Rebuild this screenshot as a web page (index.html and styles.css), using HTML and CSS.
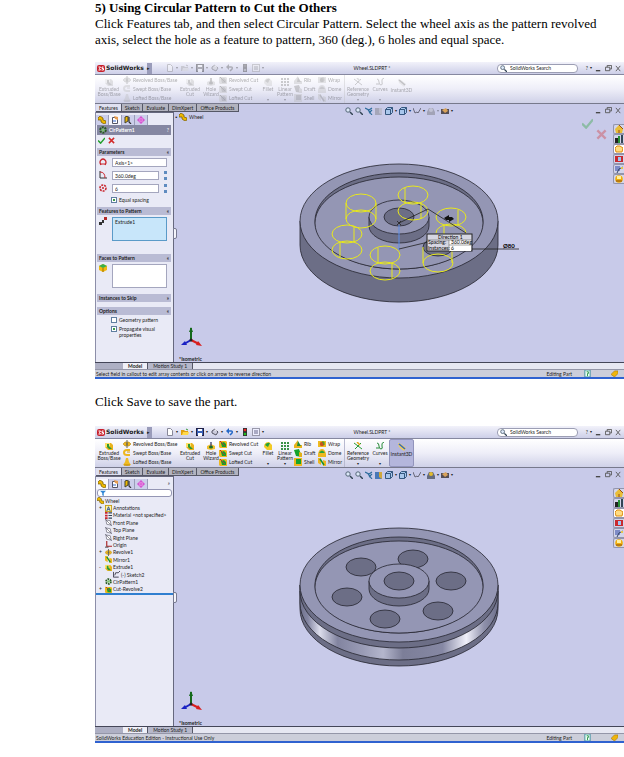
FILE: index.html
```html
<!DOCTYPE html>
<html lang="en">
<head>
  <meta charset="UTF-8">
  <meta name="viewport" content="width=device-width, initial-scale=1.0">
  <title>Using Circular Pattern to Cut the Others</title>
  <link rel="stylesheet" href="styles.css">
</head>
<body>
  <!-- shared icons -->
  <svg class="defs" aria-hidden="true">
    <symbol id="logo" viewBox="0 0 8 8"><rect y="1" width="8" height="7" rx="2" fill="#c8202c"/><path d="M1.500 3h2l-1 1.500 1 1.500h-2M5 3h1.500M5 3v1.500h1.500V6H4.500" stroke="#fff" fill="none"/></symbol>
    <symbol id="new" viewBox="0 0 8 8"><path d="M1.500.5h3l2 2v5h-5z" fill="#fff" stroke="#889"/></symbol>
    <symbol id="open" viewBox="0 0 8 8"><path d="M0 7V2h3l1 1h3v4z" fill="#e0a010"/><path d="M1 7l1-3h6L7 7z" fill="#ffd84a"/><path d="M5 1l2 1" stroke="#393"/></symbol>
    <symbol id="save" viewBox="0 0 8 8"><rect x=".5" y=".5" width="7" height="7" fill="#3a62b8" stroke="#224"/><path d="M2 1h4v2H2zM2 5h4v3H2z" fill="#fff"/></symbol>
    <symbol id="print" viewBox="0 0 8 8"><path d="M1 3l3-2 3 3-2 3-4-2z" fill="#ccd" stroke="#556"/><path d="M3 2l2-1 1 2" fill="#fff"/></symbol>
    <symbol id="undo" viewBox="0 0 8 8"><path d="M2 3h3q2 0 1 2L4 7" fill="none" stroke="#2468c8" stroke-width="1.500"/><path d="M0 3l3-3v6z" fill="#2468c8"/></symbol>
    <symbol id="light" viewBox="0 0 8 8"><rect x="2" width="4" height="8" fill="#333"/><circle cx="4" cy="2" r="1.300" fill="#e22"/><circle cx="4" cy="6" r="1.300" fill="#2b2"/></symbol>
    <symbol id="list" viewBox="0 0 8 8"><rect x=".5" y=".5" width="7" height="7" fill="#eef" stroke="#99a"/><path d="M2 3h4M2 5h4" stroke="#668"/></symbol>
    <symbol id="extrude" viewBox="0 0 8 8"><path d="M0 1h6l2 2v5H3L0 5z" fill="#e9b31c"/><path d="M0 1h5v4H0z" fill="#ffe066"/><path d="M2 2h2v2l3 3H4L2 5z" fill="#2b9a34"/></symbol>
    <symbol id="revolve" viewBox="0 0 8 8"><path d="M0 4l2-2h4l2 2-2 2H2z" fill="#eab420" stroke="#a67a08" stroke-width=".5"/><path d="M4 0v8M3 4h2" stroke="#665"/></symbol>
    <symbol id="sweep" viewBox="0 0 8 8"><path d="M7 1H4Q1 1 1 3.500T4 6h3" fill="none" stroke="#edb71f" stroke-width="2"/><path d="M4 3h3" stroke="#d69800"/></symbol>
    <symbol id="loft" viewBox="0 0 8 8"><path d="M3 0h2l1 4 2 3-4 1-4-1 2-3z" fill="#efbb22"/><path d="M1 7h6" stroke="#b98605"/></symbol>
    <symbol id="cut" viewBox="0 0 8 8"><path d="M0 1h7l1 1v6H1L0 7z" fill="#edb71f"/><path d="M2 3l3-1 2 2v3H3z" fill="#17a32c"/><path d="M1 1l5 5" stroke="#a33"/></symbol>
    <symbol id="hole" viewBox="0 0 8 8"><path d="M0 4l4-2 4 2v3L4 8 0 7z" fill="#f0bf2d"/><ellipse cx="4" cy="5" rx="2" ry="1.500" fill="#196f28"/><path d="M4 0v4" stroke="#557" stroke-width="1.500"/></symbol>
    <symbol id="fillet" viewBox="0 0 8 8"><path d="M0 5q0-5 5-5l3 3v5H3z" fill="#f2ca25"/><path d="M1 3q2-3 5-2L4 5z" fill="#25a339"/></symbol>
    <symbol id="grid" viewBox="0 0 8 8"><path d="M0 0h2v2H0zM3 0h2v2H3zM6 0h2v2H6zM0 3h2v2H0zM3 3h2v2H3zM6 3h2v2H6zM0 6h2v2H0zM3 6h2v2H3zM6 6h2v2H6z" fill="#3a9148"/></symbol>
    <symbol id="rib" viewBox="0 0 8 8"><path d="M0 5l4-5v5h4v3H0z" fill="#e9b31c"/><path d="M4 1l3 5H3z" fill="#208c38"/></symbol>
    <symbol id="draft" viewBox="0 0 8 8"><path d="M0 1l5-1 3 8-6-1z" fill="#17a32c"/><path d="M5 3l3 1v4H5z" fill="#e2b116"/></symbol>
    <symbol id="shell" viewBox="0 0 8 8"><rect width="8" height="8" fill="#edb71f"/><rect x="2" y="1" width="5" height="5" fill="#17a32c"/></symbol>
    <symbol id="wrap" viewBox="0 0 8 8"><path d="M0 1h8v6H0z" fill="#efbb22"/><circle cx="4" cy="4" r="2.200" fill="#c8551d"/><path d="M4 2h2v3" stroke="#2a3" fill="none"/></symbol>
    <symbol id="dome" viewBox="0 0 8 8"><path d="M0 5q1-5 4-5t4 5v3H0z" fill="#edb71f"/><path d="M1 4q3-5 6 0z" fill="#26a43a"/></symbol>
    <symbol id="mirror" viewBox="0 0 8 8"><path d="M0 0h3v7L0 5zM5 2l3 1v5H5z" fill="#edb71f"/><path d="M2 1l4 6" stroke="#17922c" stroke-width="1.500"/></symbol>
    <symbol id="refgeo" viewBox="0 0 8 8"><path d="M0 1l8 6M1 7l6-6" stroke="#2b9a34"/><path d="M3 0l3 3" stroke="#e2a616" stroke-width="1.500"/></symbol>
    <symbol id="curves" viewBox="0 0 8 8"><path d="M1 1q2 0 2 3t2 3 1-3 2-4M0 6h3" fill="none" stroke="#268b38"/></symbol>
    <symbol id="instant" viewBox="0 0 8 8"><path d="M0 0l3 1 5 4-2 3-5-4z" fill="#f0cf57"/><path d="M1 1l6 5" stroke="#2f66c2" stroke-width="1.500"/></symbol>
    <symbol id="zoomfit" viewBox="0 0 8 8"><circle cx="3" cy="3" r="2.200" fill="#dce8f8" stroke="#567"/><path d="M5 5l3 3" stroke="#345" stroke-width="1.500"/></symbol>
    <symbol id="prev" viewBox="0 0 8 8"><path d="M0 1l4 2 3-2M3 3l4 5M7 3L4 6" fill="none" stroke="#2c6c9c" stroke-width="1.200"/></symbol>
    <symbol id="section" viewBox="0 0 8 8"><path d="M0 1h7v7H0z" fill="#4878b8"/><path d="M4 1h3v7L4 6z" fill="#cfa83c"/></symbol>
    <symbol id="cube" viewBox="0 0 8 8"><path d="M.5 2.500l2-2h5v5l-2 2h-5z" fill="#a9c7ec" stroke="#35577f"/><path d="M.5 2.500h5v5M5.500 2.500l2-2" fill="none" stroke="#35577f"/></symbol>
    <symbol id="glasses" viewBox="0 0 8 8"><path d="M0 1l2 5 2-1 1 1 3-5" fill="none" stroke="#667"/></symbol>
    <symbol id="scene" viewBox="0 0 8 8"><path d="M0 8V5l2-4h4l2 4v3z" fill="#666b7d"/><circle cx="4" cy="3" r="2" fill="#e2bb2d"/></symbol>
    <symbol id="camera" viewBox="0 0 8 8"><path d="M0 2h8v5H0z" fill="#554e55"/><path d="M1 3l4-2 2 3-3 2z" fill="#d8a25a"/></symbol>
    <symbol id="part" viewBox="0 0 8 8"><path d="M0 2l2-2 3 2v2l3 1v2L6 8 3 6V4L0 4z" fill="#edb800" stroke="#6e5500" stroke-width=".7"/></symbol>
    <symbol id="props" viewBox="0 0 8 8"><path d="M1.500 1.500h5v6h-5z" fill="#fff" stroke="#556"/><path d="M3 0l4 1v3L4 3z" fill="#e69b50"/><path d="M2 5h3" stroke="#36c"/></symbol>
    <symbol id="config" viewBox="0 0 8 8"><path d="M1 1l3-1v5L1 7z" fill="#edb800" stroke="#443"/><path d="M5 1v5l2 2" stroke="#333" stroke-width="1.200" fill="none"/></symbol>
    <symbol id="target" viewBox="0 0 8 8"><circle cx="4" cy="4" r="2.500" fill="#f7c8f2" stroke="#d44bd0"/><path d="M4 0v8M0 4h8" stroke="#d44bd0"/></symbol>
    <symbol id="gear" viewBox="0 0 8 8"><circle cx="4" cy="4" r="2.800" fill="none" stroke="#285a20" stroke-width="2" stroke-dasharray="2 .9"/><circle cx="4" cy="4" r="1.500" fill="#7bc36c"/></symbol>
    <symbol id="redgear" viewBox="0 0 8 8"><circle cx="4" cy="4" r="3" fill="none" stroke="#c9252d" stroke-width="1.600" stroke-dasharray="2 1"/><circle cx="4" cy="4" r="1" fill="#c9252d"/></symbol>
    <symbol id="rotate" viewBox="0 0 8 8"><path d="M2 7Q0 4 2 2t4 0 0 5" fill="none" stroke="#c9252d" stroke-width="1.300"/><path d="M1 6h6" stroke="#c9252d"/></symbol>
    <symbol id="angle" viewBox="0 0 8 8"><path d="M1 0v7h7" fill="none" stroke="#333"/><path d="M1 1q5 0 5 6" fill="none" stroke="#c9252d"/></symbol>
    <symbol id="feats" viewBox="0 0 8 8"><path d="M0 5h3v3H0zM3 3h2v3H3z" fill="#333"/><path d="M5 0h3v3H5z" fill="#b32a2a"/></symbol>
    <symbol id="face" viewBox="0 0 8 8"><path d="M0 2l4-2 4 2v4L4 8 0 6z" fill="#f2b90f"/><path d="M0 2l4-2 4 2-4 2z" fill="#38b04a"/><path d="M4 4v4" stroke="#9c7100"/></symbol>
    <symbol id="tick" viewBox="0 0 8 8"><path d="M0 4l3 3 5-6" fill="none" stroke="#23a02d" stroke-width="1.700"/></symbol>
    <symbol id="cross" viewBox="0 0 8 8"><path d="M1 1l6 6M7 1L1 7" stroke="#d22a2a" stroke-width="1.700"/></symbol>
    <symbol id="note" viewBox="0 0 8 8"><rect x=".5" y=".5" width="7" height="7" fill="#fff3a8" stroke="#c29a12"/><path d="M2 7l2-5 2 5M3 5h2" fill="none" stroke="#224a9c"/></symbol>
    <symbol id="material" viewBox="0 0 8 8"><path d="M0 1h3M0 4h3M0 7h3" stroke="#c9252d" stroke-width="2"/><path d="M4 1h4M4 4h4M4 7h4" stroke="#345" stroke-width="1.200"/></symbol>
    <symbol id="plane" viewBox="0 0 8 8"><path d="M1 1l5 1 1 5-5-1zM0 0l8 8" fill="#fff" stroke="#556" stroke-width=".7"/></symbol>
    <symbol id="origin" viewBox="0 0 8 8"><path d="M2 0v6h6" fill="none" stroke="#a22" stroke-width="1.300"/><path d="M0 7h4" stroke="#333"/></symbol>
    <symbol id="sketch" viewBox="0 0 8 8"><path d="M.5 1v6h6M2 5l1-3h3l2-2" fill="none" stroke="#334"/></symbol>
    <symbol id="house" viewBox="0 0 8 8"><path d="M0 4l4-4 4 4-1 4H1z" fill="#e9bd37"/><path d="M4 0l4 4M4 5v3" stroke="#9a4d13"/></symbol>
    <symbol id="books" viewBox="0 0 8 8"><path d="M0 3h3v5H0z" fill="#222"/><path d="M3 1h2v7H3z" fill="#269136"/><path d="M6 0h2v8H6z" fill="#345"/></symbol>
    <symbol id="folder" viewBox="0 0 8 8"><path d="M0 3l2-2h3l3 2-1 4H1z" fill="#ffdc83" stroke="#dd8d11"/></symbol>
    <symbol id="palette" viewBox="0 0 8 8"><path d="M0 1h8v6H0z" fill="#c92a2f"/><path d="M3 2h3v4H3z" fill="#9cc7f3"/></symbol>
    <symbol id="tools" viewBox="0 0 8 8"><path d="M0 1h5v5H0z" fill="#7e8bc6"/><path d="M2 8l2-4 4-2" stroke="#346" fill="none"/><path d="M6 2h2v2H6z" fill="#e5c64e"/></symbol>
    <symbol id="ball" viewBox="0 0 8 8"><circle cx="4" cy="4" r="3.800" fill="#f1ae0c"/><path d="M2 1h4v3H2z" fill="#fff0a0"/><path d="M1 6h6" stroke="#844a10"/></symbol>
    <symbol id="help" viewBox="0 0 8 8"><rect x="1" width="6" height="8" fill="#e8fff0" stroke="#378b9c"/><path d="M3 2h2v2H4v3" fill="none" stroke="#218b42"/></symbol>
    <symbol id="tag" viewBox="0 0 8 8"><path d="M0 5l4-4h4v3L4 8z" fill="#efb50c" stroke="#9a6b00" stroke-width=".6"/></symbol>
    <symbol id="restore" viewBox="0 0 8 8"><path d="M2.500 2.500v-2h5v4h-2M.5 2.500h5v4h-5z" fill="none" stroke="#555"/></symbol>
    <symbol id="close" viewBox="0 0 8 8"><path d="M1 1l5 6M6 1L1 7" stroke="#555"/></symbol>
    <symbol id="min" viewBox="0 0 8 8"><path d="M1 6.500h5" stroke="#444" stroke-width="1.500"/></symbol>
    <symbol id="funnel" viewBox="0 0 8 8"><path d="M0 1h8L5 4v4L3 7V4z" fill="#2f86d6"/></symbol>
    <symbol id="triad" viewBox="0 0 26 24"><path d="M12 15V3" stroke="#14691a" stroke-width="2"/><path d="M12 2l2 5h-4z" fill="#14691a"/><path d="M12 15l8 4" stroke="#d81e1e" stroke-width="2"/><path d="M23 21l-6-1 2-4z" fill="#d81e1e"/><path d="M12 15l-7 4" stroke="#1b22c4" stroke-width="2"/><path d="M2 20l6 0-2-4z" fill="#1b22c4"/><circle cx="12" cy="15" r="1.500" fill="#222"/></symbol>
  </svg>

  <h1>5) Using Circular Pattern to Cut the Others</h1>
  <p>Click Features tab, and then select Circular Pattern. Select the wheel axis as the pattern revolved<br>axis, select the hole as a feature to pattern, 360 (deg.), 6 holes and equal space.</p>

  <!-- window while the pattern is being set up -->
  <section class="window">
    <header class="titlebar">
      <div class="brand"><svg><use href="#logo"/></svg><b>SolidWorks</b><button class="expand" aria-label="Menu">▸</button></div>
      <div class="quick dim">
        <button class="drop" aria-label="New"><svg><use href="#new"/></svg></button>
        <button class="drop" aria-label="Open"><svg><use href="#open"/></svg></button>
        <button class="drop" aria-label="Save"><svg><use href="#save"/></svg></button>
        <button class="drop" aria-label="Print"><svg><use href="#print"/></svg></button>
        <button class="drop" aria-label="Undo"><svg><use href="#undo"/></svg></button>
        <button aria-label="Rebuild"><svg><use href="#light"/></svg></button>
        <button class="drop" aria-label="Options"><svg><use href="#list"/></svg></button>
      </div>
      <span class="doc">Wheel.SLDPRT *</span>
      <label class="search"><svg><use href="#zoomfit"/></svg><input type="text" value="SolidWorks Search" aria-label="Search"></label>
      <div class="controls"><button class="drop">?</button><button aria-label="Minimize"><svg><use href="#min"/></svg></button><button aria-label="Restore"><svg><use href="#restore"/></svg></button><button aria-label="Close"><svg><use href="#close"/></svg></button></div>
    </header>
    <div class="ribbon off">
      <button class="big"><svg><use href="#extrude"/></svg>Extruded Boss/Base</button>
      <div class="stack">
        <button><svg><use href="#revolve"/></svg>Revolved Boss/Base</button>
        <button><svg><use href="#sweep"/></svg>Swept Boss/Base</button>
        <button><svg><use href="#loft"/></svg>Lofted Boss/Base</button>
      </div>
      <button class="big"><svg><use href="#extrude"/></svg>Extruded Cut</button>
      <button class="big"><svg><use href="#hole"/></svg>Hole Wizard</button>
      <div class="stack">
        <button><svg><use href="#cut"/></svg>Revolved Cut</button>
        <button><svg><use href="#cut"/></svg>Swept Cut</button>
        <button><svg><use href="#cut"/></svg>Lofted Cut</button>
      </div>
      <button class="big more"><svg><use href="#fillet"/></svg>Fillet</button>
      <button class="big more"><svg><use href="#grid"/></svg>Linear Pattern</button>
      <div class="stack">
        <button><svg><use href="#rib"/></svg>Rib</button>
        <button><svg><use href="#draft"/></svg>Draft</button>
        <button><svg><use href="#shell"/></svg>Shell</button>
      </div>
      <div class="stack">
        <button><svg><use href="#wrap"/></svg>Wrap</button>
        <button><svg><use href="#dome"/></svg>Dome</button>
        <button><svg><use href="#mirror"/></svg>Mirror</button>
      </div>
      <button class="big more first"><svg><use href="#refgeo"/></svg>Reference Geometry</button>
      <button class="big more"><svg><use href="#curves"/></svg>Curves</button>
      <button class="big instant"><svg><use href="#instant"/></svg>Instant3D</button>
    </div>
    <div class="viewbar">
      <nav class="tabs"><a href="#" class="active">Features</a><a href="#">Sketch</a><a href="#">Evaluate</a><a href="#">DimXpert</a><a href="#">Office Products</a></nav>
      <div class="viewtools">
        <button aria-label="Zoom to fit"><svg><use href="#zoomfit"/></svg></button>
        <button aria-label="Zoom to area"><svg><use href="#zoomfit"/></svg></button>
        <button aria-label="Previous view"><svg><use href="#prev"/></svg></button>
        <button class="dim" aria-label="Section view"><svg><use href="#section"/></svg></button>
        <button class="drop" aria-label="Orientation"><svg><use href="#cube"/></svg></button>
        <button class="drop" aria-label="Display style"><svg><use href="#cube"/></svg></button>
        <button class="drop" aria-label="Hide or show"><svg><use href="#glasses"/></svg></button>
        <button class="drop dim" aria-label="Scene"><svg><use href="#scene"/></svg></button>
        <button class="drop" aria-label="View settings"><svg><use href="#camera"/></svg></button>
      </div>
      <div class="controls"><button aria-label="Minimize"><svg><use href="#min"/></svg></button><button aria-label="Restore"><svg><use href="#restore"/></svg></button><button aria-label="Close"><svg><use href="#close"/></svg></button></div>
    </div>
    <div class="main">
      <aside class="panel">
        <div class="ptabs"><button><svg><use href="#part"/></svg></button><button class="on"><svg><use href="#props"/></svg></button><button><svg><use href="#config"/></svg></button><button><svg><use href="#target"/></svg></button></div>
        <div class="feature"><svg><use href="#gear"/></svg><b>CirPattern1</b><span>?</span></div>
        <div class="confirm"><button aria-label="OK"><svg><use href="#tick"/></svg></button><button aria-label="Cancel"><svg><use href="#cross"/></svg></button></div>
        <fieldset class="parameters">
          <legend>Parameters<span>«</span></legend>
          <div class="field"><svg><use href="#rotate"/></svg><input type="text" value="Axis&lt;1&gt;" aria-label="Axis"></div>
          <div class="field spin"><svg><use href="#angle"/></svg><input type="text" value="360.0deg" aria-label="Angle"><i></i></div>
          <div class="field spin"><svg><use href="#redgear"/></svg><input type="text" value="6" aria-label="Instances"><i></i></div>
          <label class="check"><input type="checkbox" checked>Equal spacing</label>
        </fieldset>
        <fieldset class="features">
          <legend>Features to Pattern<span>«</span></legend>
          <div class="field"><svg><use href="#feats"/></svg><textarea class="picked" aria-label="Features to Pattern">Extrude1</textarea></div>
        </fieldset>
        <fieldset class="faces">
          <legend>Faces to Pattern<span>«</span></legend>
          <div class="field"><svg><use href="#face"/></svg><textarea aria-label="Faces to Pattern"></textarea></div>
        </fieldset>
        <fieldset class="skip"><legend>Instances to Skip<span>»</span></legend></fieldset>
        <fieldset class="options">
          <legend>Options<span>«</span></legend>
          <label class="check"><input type="checkbox">Geometry pattern</label>
          <label class="check"><input type="checkbox" checked>Propagate visual properties</label>
        </fieldset>
      </aside>
      <div class="stage">
        <i class="handle"></i>
        <div class="flyout">▪ <svg><use href="#part"/></svg>Wheel</div>
        <svg class="wheel" viewBox="278 162 240 150">
          <path class="side" d="M299 221v24a99 57 0 0 0 198 0v-24z"/>
          <ellipse class="top" cx="398" cy="221" rx="99" ry="57"/>
          <ellipse class="side" cx="398" cy="221" rx="84" ry="48"/>
          <path class="top" d="M314 223a84 46 0 0 1 168 0a84 46 0 0 1-168 0z"/>
          <ellipse class="side" cx="437" cy="247" rx="15" ry="9"/>
          <path class="side" d="M368 217v9a30 17 0 0 0 60 0v-9z"/>
          <ellipse class="top" cx="398" cy="217" rx="30" ry="17"/>
          <ellipse class="side" cx="398" cy="217" rx="15" ry="9"/>
          <g class="preview">
            <ellipse cx="412" cy="195" rx="15" ry="9"/><ellipse cx="412" cy="211" rx="15" ry="9"/><path d="M404 188v15M420 203v16"/>
            <ellipse cx="450" cy="217" rx="15" ry="9"/><path d="M435 233a15 9 0 0 1 30 0M457 210v15M443 225v9"/>
            <ellipse cx="360" cy="203" rx="15" ry="9"/><ellipse cx="360" cy="219" rx="15" ry="9"/><path d="M345 203v16M375 203v16"/>
            <ellipse cx="346" cy="234" rx="15" ry="9"/><ellipse cx="346" cy="250" rx="15" ry="9"/><path d="M353 227v15M339 242v15"/>
            <ellipse cx="384" cy="255" rx="15" ry="9"/><ellipse cx="384" cy="271" rx="15" ry="9"/><path d="M377 248v15M391 263v15"/>
            <ellipse cx="437" cy="263" rx="15" ry="9"/><path d="M422 247v16M451 250v13"/>
          </g>
          <path d="M398 225v25" stroke="#5c8ee8"/>
          <path class="line" d="M398 223l29-14 38 24M398 249l42-10M470 249h48M396 221l4 4M400 221l-4 4"/>
          <path d="M443 218l5-3v2h3l2 2-5 3v-2h-3z" fill="#111"/>
          <text x="502" y="248" class="dimension">Ø80</text>
          <g class="callout">
            <rect x="426" y="234" width="45" height="17" fill="#d6d6e2" stroke="#222"/>
            <path d="M448 240h22v11h-22z" fill="#fff"/>
            <path d="M426 240h45M448 245h22M448 240v11" stroke="#666" stroke-width=".6"/>
            <text x="437" y="239">Direction 1</text>
            <text x="427" y="244">Spacing:</text><text x="450" y="244">360.0deg</text>
            <text x="427" y="250">Instances:</text><text x="450" y="250">6</text>
          </g>
        </svg>
        <div class="corner"><svg><use href="#tick"/></svg><svg><use href="#cross"/></svg></div>
        <div class="taskpane"><button><svg><use href="#house"/></svg></button><button><svg><use href="#books"/></svg></button><button class="on"><svg><use href="#folder"/></svg></button><button><svg><use href="#palette"/></svg></button><button><svg><use href="#tools"/></svg></button><button><svg><use href="#ball"/></svg></button></div>
        <div class="orient"><svg><use href="#triad"/></svg><b>*Isometric</b></div>
      </div>
    </div>
    <nav class="sheets"><span></span><a href="#" class="active">Model</a><a href="#">Motion Study 1</a></nav>
    <footer class="status"><span>Select field in callout to edit array contents or click on arrow to reverse direction</span><em>Editing Part</em><svg><use href="#help"/></svg><svg><use href="#tag"/></svg></footer>
  </section>

  <p class="save">Click Save to save the part.</p>

  <!-- finished part -->
  <section class="window">
    <header class="titlebar">
      <div class="brand"><svg><use href="#logo"/></svg><b>SolidWorks</b><button class="expand" aria-label="Menu">▸</button></div>
      <div class="quick">
        <button class="drop" aria-label="New"><svg><use href="#new"/></svg></button>
        <button class="drop" aria-label="Open"><svg><use href="#open"/></svg></button>
        <button class="drop" aria-label="Save"><svg><use href="#save"/></svg></button>
        <button class="drop" aria-label="Print"><svg><use href="#print"/></svg></button>
        <button class="drop" aria-label="Undo"><svg><use href="#undo"/></svg></button>
        <button aria-label="Rebuild"><svg><use href="#light"/></svg></button>
        <button class="drop" aria-label="Options"><svg><use href="#list"/></svg></button>
      </div>
      <span class="doc">Wheel.SLDPRT *</span>
      <label class="search"><svg><use href="#zoomfit"/></svg><input type="text" value="SolidWorks Search" aria-label="Search"></label>
      <div class="controls"><button class="drop">?</button><button aria-label="Minimize"><svg><use href="#min"/></svg></button><button aria-label="Restore"><svg><use href="#restore"/></svg></button><button aria-label="Close"><svg><use href="#close"/></svg></button></div>
    </header>
    <div class="ribbon">
      <button class="big"><svg><use href="#extrude"/></svg>Extruded Boss/Base</button>
      <div class="stack">
        <button><svg><use href="#revolve"/></svg>Revolved Boss/Base</button>
        <button><svg><use href="#sweep"/></svg>Swept Boss/Base</button>
        <button><svg><use href="#loft"/></svg>Lofted Boss/Base</button>
      </div>
      <button class="big"><svg><use href="#extrude"/></svg>Extruded Cut</button>
      <button class="big"><svg><use href="#hole"/></svg>Hole Wizard</button>
      <div class="stack">
        <button><svg><use href="#cut"/></svg>Revolved Cut</button>
        <button><svg><use href="#cut"/></svg>Swept Cut</button>
        <button><svg><use href="#cut"/></svg>Lofted Cut</button>
      </div>
      <button class="big more"><svg><use href="#fillet"/></svg>Fillet</button>
      <button class="big more"><svg><use href="#grid"/></svg>Linear Pattern</button>
      <div class="stack">
        <button><svg><use href="#rib"/></svg>Rib</button>
        <button><svg><use href="#draft"/></svg>Draft</button>
        <button><svg><use href="#shell"/></svg>Shell</button>
      </div>
      <div class="stack">
        <button><svg><use href="#wrap"/></svg>Wrap</button>
        <button><svg><use href="#dome"/></svg>Dome</button>
        <button><svg><use href="#mirror"/></svg>Mirror</button>
      </div>
      <button class="big more first"><svg><use href="#refgeo"/></svg>Reference Geometry</button>
      <button class="big more"><svg><use href="#curves"/></svg>Curves</button>
      <button class="big instant"><svg><use href="#instant"/></svg>Instant3D</button>
    </div>
    <div class="viewbar">
      <nav class="tabs"><a href="#" class="active">Features</a><a href="#">Sketch</a><a href="#">Evaluate</a><a href="#">DimXpert</a><a href="#">Office Products</a></nav>
      <div class="viewtools">
        <button aria-label="Zoom to fit"><svg><use href="#zoomfit"/></svg></button>
        <button aria-label="Zoom to area"><svg><use href="#zoomfit"/></svg></button>
        <button aria-label="Previous view"><svg><use href="#prev"/></svg></button>
        <button aria-label="Section view"><svg><use href="#section"/></svg></button>
        <button class="drop" aria-label="Orientation"><svg><use href="#cube"/></svg></button>
        <button class="drop" aria-label="Display style"><svg><use href="#cube"/></svg></button>
        <button class="drop" aria-label="Hide or show"><svg><use href="#glasses"/></svg></button>
        <button class="drop" aria-label="Scene"><svg><use href="#scene"/></svg></button>
        <button class="drop" aria-label="View settings"><svg><use href="#camera"/></svg></button>
      </div>
      <div class="controls"><button aria-label="Minimize"><svg><use href="#min"/></svg></button><button aria-label="Restore"><svg><use href="#restore"/></svg></button><button aria-label="Close"><svg><use href="#close"/></svg></button></div>
    </div>
    <div class="main">
      <aside class="panel">
        <div class="ptabs"><button class="on"><svg><use href="#part"/></svg></button><button><svg><use href="#props"/></svg></button><button><svg><use href="#config"/></svg></button><button><svg><use href="#target"/></svg></button><span>»</span></div>
        <label class="filter"><svg><use href="#funnel"/></svg><input type="text" aria-label="Filter"></label>
        <ul class="tree">
          <li class="root"><svg><use href="#part"/></svg>Wheel</li>
          <li class="plus"><svg><use href="#note"/></svg>Annotations</li>
          <li><svg><use href="#material"/></svg>Material &lt;not specified&gt;</li>
          <li><svg><use href="#plane"/></svg>Front Plane</li>
          <li><svg><use href="#plane"/></svg>Top Plane</li>
          <li><svg><use href="#plane"/></svg>Right Plane</li>
          <li><svg><use href="#origin"/></svg>Origin</li>
          <li class="plus"><svg><use href="#revolve"/></svg>Revolve1</li>
          <li><svg><use href="#mirror"/></svg>Mirror1</li>
          <li class="minus"><svg><use href="#extrude"/></svg>Extrude1</li>
          <li class="child"><svg><use href="#sketch"/></svg>(-) Sketch2</li>
          <li><svg><use href="#gear"/></svg>CirPattern1</li>
          <li class="plus"><svg><use href="#cut"/></svg>Cut-Revolve2</li>
        </ul>
      </aside>
      <div class="stage">
        <i class="handle"></i>
        <svg class="wheel" viewBox="278 526 240 150">
          <defs>
            <linearGradient id="groove">
              <stop offset="0" stop-color="#6f718c"/><stop offset=".04" stop-color="#8486a2"/><stop offset=".1" stop-color="#dcddec"/><stop offset=".19" stop-color="#8284a0"/><stop offset=".32" stop-color="#9a9cb6"/><stop offset=".42" stop-color="#b4b6cc"/><stop offset=".52" stop-color="#7c7e98"/><stop offset=".72" stop-color="#8688a4"/><stop offset=".84" stop-color="#f0f0fa"/><stop offset=".93" stop-color="#8e90aa"/><stop offset="1" stop-color="#6f718c"/>
            </linearGradient>
          </defs>
          <path class="side" d="M299 585v24a99 57 0 0 0 198 0v-24z"/>
          <path d="M299 591v12a99 57 0 0 0 198 0v-12z" fill="url(#groove)" stroke="#24252f" stroke-width=".8"/>
          <path class="side" d="M299 585v6a99 57 0 0 0 198 0v-6z"/>
          <ellipse class="top" cx="398" cy="585" rx="99" ry="57"/>
          <ellipse class="side" cx="398" cy="585" rx="84" ry="48"/>
          <path class="top" d="M314 587a84 46 0 0 1 168 0a84 46 0 0 1-168 0z"/>
          <g class="side">
            <ellipse cx="412" cy="559" rx="15" ry="9"/><ellipse cx="450" cy="581" rx="15" ry="9"/>
            <ellipse cx="437" cy="611" rx="15" ry="9"/><ellipse cx="384" cy="619" rx="15" ry="9"/>
            <ellipse cx="346" cy="597" rx="15" ry="9"/><ellipse cx="360" cy="567" rx="15" ry="9"/>
          </g>
          <path class="side" d="M368 581v8a30 17 0 0 0 60 0v-8z"/>
          <ellipse class="top" cx="398" cy="581" rx="30" ry="17"/>
          <ellipse class="side" cx="398" cy="581" rx="15" ry="9"/>
        </svg>
        <div class="taskpane"><button><svg><use href="#house"/></svg></button><button><svg><use href="#books"/></svg></button><button class="on"><svg><use href="#folder"/></svg></button><button><svg><use href="#palette"/></svg></button><button><svg><use href="#tools"/></svg></button><button><svg><use href="#ball"/></svg></button></div>
        <div class="orient"><svg><use href="#triad"/></svg><b>*Isometric</b></div>
      </div>
    </div>
    <nav class="sheets"><span></span><a href="#" class="active">Model</a><a href="#">Motion Study 1</a></nav>
    <footer class="status"><span>SolidWorks Education Edition - Instructional Use Only</span><em>Editing Part</em><svg><use href="#help"/></svg><svg><use href="#tag"/></svg></footer>
  </section>
</body>
</html>
```
FILE: styles.css
```css
* {
  box-sizing: border-box;
}

body {
  margin: 0;
  padding: 0 0 14px 95px;
  background: #fff;
  color: #000;
  font-family: "Liberation Serif", "Times New Roman", serif;
  font-size: 13px;
  line-height: 16px;
}

h1, p {
  margin: 0;
  font-size: 13px;
}

p {
  margin-bottom: 14px;
}

p.save {
  margin: 15px 0 16px;
}

.defs {
  position: absolute;
  width: 0;
  height: 0;
}

button, input, textarea {
  font: inherit;
  color: inherit;
  margin: 0;
  padding: 0;
  border: 0;
  background: none;
}

button {
  display: flex;
  align-items: center;
}

a {
  color: inherit;
  text-decoration: none;
}

svg {
  width: 8px;
  height: 8px;
  flex: none;
}

/* window */
.window {
  font-family: Lato, "Liberation Sans", sans-serif;
  font-size: 5px;
  line-height: 6px;
  color: #222;
  background: #c8cae9;
}

.dim {
  opacity: 0.4;
  filter: grayscale(1);
}

.drop::after {
  content: "▾";
  margin-left: 2px;
  font-size: 4px;
}

.titlebar {
  display: grid;
  grid-template-columns: 71px 1fr auto 1fr 46px;
  align-items: center;
  height: 12px;
  background: linear-gradient(#f2f2fa, #cdcfe8);
}

.brand {
  display: flex;
  align-items: center;
  gap: 1px;
  padding-left: 2px;
}

.brand b {
  font-family: "DejaVu Sans", sans-serif;
  font-size: 6px;
}

.expand {
  width: 5px;
  height: 11px;
  margin-left: auto;
  margin-right: 14px;
  background: #9a9cba;
}

.quick {
  display: flex;
  gap: 3px;
}

.search {
  justify-self: end;
  display: flex;
  align-items: center;
  gap: 3px;
  width: 81px;
  height: 9px;
  padding: 0 2px;
  background: #fff;
  border: 1px solid #9c9eb4;
  border-radius: 4px;
}

.search svg {
  width: 7px;
  height: 7px;
}

.search input {
  width: 60px;
  height: 6px;
}

.controls {
  display: flex;
  justify-content: flex-end;
  align-items: center;
  gap: 3px;
  padding-right: 2px;
}

.controls svg {
  width: 7px;
  height: 7px;
}

/* ribbon */
.ribbon {
  display: grid;
  grid-template-columns: 28px 54px 26px 16px 41px 16px 18px 24px 26px 27px 18px 25px;
  grid-template-rows: 28px;
  height: 30px;
  background: linear-gradient(#fff, #eeeef8 50%, #cfd1e8);
  border-top: 1px solid #8688a0;
  border-bottom: 1px solid #77798c;
}

.ribbon.off > * {
  opacity: 0.35;
  filter: grayscale(1);
}

.big {
  position: relative;
  flex-direction: column;
  padding-top: 3px;
  line-height: 5px;
  text-align: center;
}

.big svg {
  margin-bottom: 1px;
}

.more::after {
  content: "▾";
  position: absolute;
  bottom: 1px;
  font-size: 4px;
}

.stack {
  display: grid;
  grid-template-rows: repeat(3, 9px);
}

.stack button {
  gap: 2px;
  white-space: nowrap;
}

.first {
  border-left: 1px solid #b8bad0;
}

.instant {
  background: #b4b6dc;
  border: 1px solid #9294bc;
  border-radius: 2px;
}

.ribbon.off .instant {
  background: none;
  border-color: transparent;
}

.viewbar {
  display: grid;
  grid-template-columns: 1fr auto 1fr;
  align-items: start;
  height: 8px;
  padding-left: 78px;
}

.tabs {
  display: flex;
  margin-left: -77px;
}

.tabs a {
  height: 8px;
  padding: 0 3px;
  line-height: 8px;
  white-space: nowrap;
  background: #b2b3bf;
  border-right: 1px solid #555766;
  border-bottom: 1px solid #555766;
}

.tabs .active {
  background: #dfe0f0;
}

.viewtools {
  display: flex;
  gap: 2px;
  padding-top: 3px;
}

.viewbar .controls {
  padding-top: 3px;
}

/* left panel */
.main {
  display: grid;
  grid-template-columns: 79px 1fr;
  min-height: 250px;
}

.panel {
  background: #e9eaf6;
  border-left: 1px solid #8c8ea8;
  border-right: 1px solid #66687e;
}

.ptabs {
  display: flex;
  height: 13px;
  padding-top: 2px;
  border-top: 1px solid #66687e;
}

.ptabs button {
  padding: 1px 2px;
  background: #ccceea;
  border-right: 1px solid #9a9cb8;
}

.ptabs .on {
  background: #f6f6fc;
}

.ptabs span {
  margin: 1px 3px 0 auto;
}

.feature {
  display: flex;
  align-items: center;
  gap: 2px;
  height: 10px;
  margin: 0 2px 0 1px;
  padding: 0 2px;
  background: #8587a2;
  color: #fff;
}

.feature span {
  margin-left: auto;
}

.confirm {
  display: flex;
  gap: 3px;
  padding: 2px 2px 4px;
}

.confirm svg {
  width: 7px;
  height: 7px;
}

fieldset {
  min-width: 0;
  margin: 0 2px 0 1px;
  padding: 0 4px 0 2px;
  border: 0;
}

legend {
  float: left;
  display: flex;
  justify-content: space-between;
  width: 74px;
  height: 8px;
  margin: 0 -4px 2px -2px;
  padding: 0 2px;
  line-height: 8px;
  font-weight: bold;
  background: #b9bbd4;
}

legend + * {
  clear: both;
}

.parameters {
  height: 59px;
}

.features {
  height: 47px;
}

.faces {
  height: 40px;
}

.skip {
  height: 13px;
}

.field {
  display: flex;
  gap: 5px;
  margin-bottom: 4px;
}

.field input {
  flex: 1;
  width: 0;
  height: 9px;
  padding-left: 2px;
  background: #fff;
  border: 1px solid #a4a6be;
}

.spin i {
  width: 3px;
  height: 9px;
  border-top: 3px solid #5f8cc0;
  border-bottom: 3px solid #5f8cc0;
}

.field textarea {
  flex: 1;
  width: 0;
  height: 24px;
  padding: 1px 2px;
  background: #fff;
  border: 1px solid #a4a6be;
  overflow: hidden;
  resize: none;
}

.field .picked {
  background: #c8e6fa;
  border-color: #5a9ac8;
}

.check {
  display: flex;
  align-items: flex-start;
  gap: 2px;
  margin: 0 0 3px 12px;
}

.check input {
  appearance: none;
  width: 6px;
  height: 6px;
  flex: none;
  background: #fff;
  border: 1px solid #5f7ea0;
}

.check input:checked {
  background: #3d9a48;
  box-shadow: inset 0 0 0 1px #fff;
}

/* feature tree */
.filter {
  display: flex;
  height: 8px;
  margin: 0 1px;
  background: #fff;
  border: 1px solid #9496b4;
  border-radius: 3px;
}

.filter svg {
  width: 6px;
  height: 6px;
  margin-left: 2px;
}

.filter input {
  width: 60px;
  height: 6px;
}

.tree {
  display: grid;
  grid-auto-rows: 1fr;
  height: 98px;
  margin: 0;
  padding: 0;
  list-style: none;
  border-bottom: 2px solid #2f7fd0;
}

.tree li {
  display: flex;
  align-items: center;
  gap: 1px;
  padding-left: 9px;
  white-space: nowrap;
}

.tree svg {
  width: 7px;
  height: 7px;
}

.tree .root {
  padding-left: 1px;
}

.tree .plus, .tree .minus {
  padding-left: 3px;
}

.tree .plus::before, .tree .minus::before {
  content: "+";
  width: 5px;
}

.tree .minus::before {
  content: "-";
}

.tree .child {
  padding-left: 17px;
}

/* graphics area */
.stage {
  position: relative;
  display: flex;
  align-items: center;
  justify-content: center;
}

.wheel {
  width: 240px;
  height: 150px;
}

.top {
  fill: #9496b4;
  stroke: #24252f;
  stroke-width: 0.8;
}

.side {
  fill: #6c6e86;
  stroke: #24252f;
  stroke-width: 0.8;
}

.preview {
  fill: none;
  stroke: #e8e81c;
}

.line {
  fill: none;
  stroke: #222;
  stroke-width: 0.8;
}

.dimension {
  font-size: 6px;
  font-weight: bold;
}

.handle {
  position: absolute;
  left: -1px;
  top: 116px;
  width: 4px;
  height: 11px;
  background: #f4f4fb;
  border: 1px solid #777990;
  border-radius: 0 2px 2px 0;
}

.flyout {
  position: absolute;
  left: 1px;
  top: 1px;
  display: flex;
  align-items: center;
  gap: 2px;
}

.corner {
  position: absolute;
  top: 6px;
  right: 17px;
  width: 25px;
  height: 22px;
  display: flex;
  justify-content: space-between;
  opacity: 0.35;
}

.corner svg {
  width: 11px;
  height: 11px;
}

.corner svg:last-child {
  align-self: flex-end;
}

.taskpane {
  position: absolute;
  right: 0;
  top: 12px;
}

.taskpane button {
  width: 11px;
  height: 10px;
  padding-left: 1px;
  border: 1px solid #9294ac;
  border-right: 0;
  border-radius: 2px 0 0 2px;
  background: #d3d5ea;
}

.taskpane .on {
  background: #fff;
}

.orient {
  position: absolute;
  left: 5px;
  bottom: 0;
}

.orient svg {
  display: block;
  width: 26px;
  height: 24px;
  margin-bottom: 7px;
}

/* bottom bars */
.sheets {
  display: flex;
  height: 7px;
  line-height: 6px;
  background: #e6e7f2;
  border-top: 1px solid #444658;
}

.sheets span {
  width: 28px;
  background: #aeb0c4;
}

.sheets a {
  padding: 0 5px;
  background: #b6b8ca;
  border-right: 1px solid #555766;
}

.sheets .active {
  background: #f0f0f8;
  font-weight: bold;
}

.status {
  display: flex;
  align-items: center;
  height: 10px;
  padding: 0 6px 0 1px;
  background: #ccceda;
  border-top: 1px solid #9496a8;
  border-bottom: 2px solid #2f62d0;
}

.status span {
  margin-right: auto;
}

.status em {
  margin-right: 12px;
  font-style: normal;
}

.status svg {
  width: 7px;
  height: 7px;
}

.status svg:last-child {
  margin-left: 20px;
}
```
